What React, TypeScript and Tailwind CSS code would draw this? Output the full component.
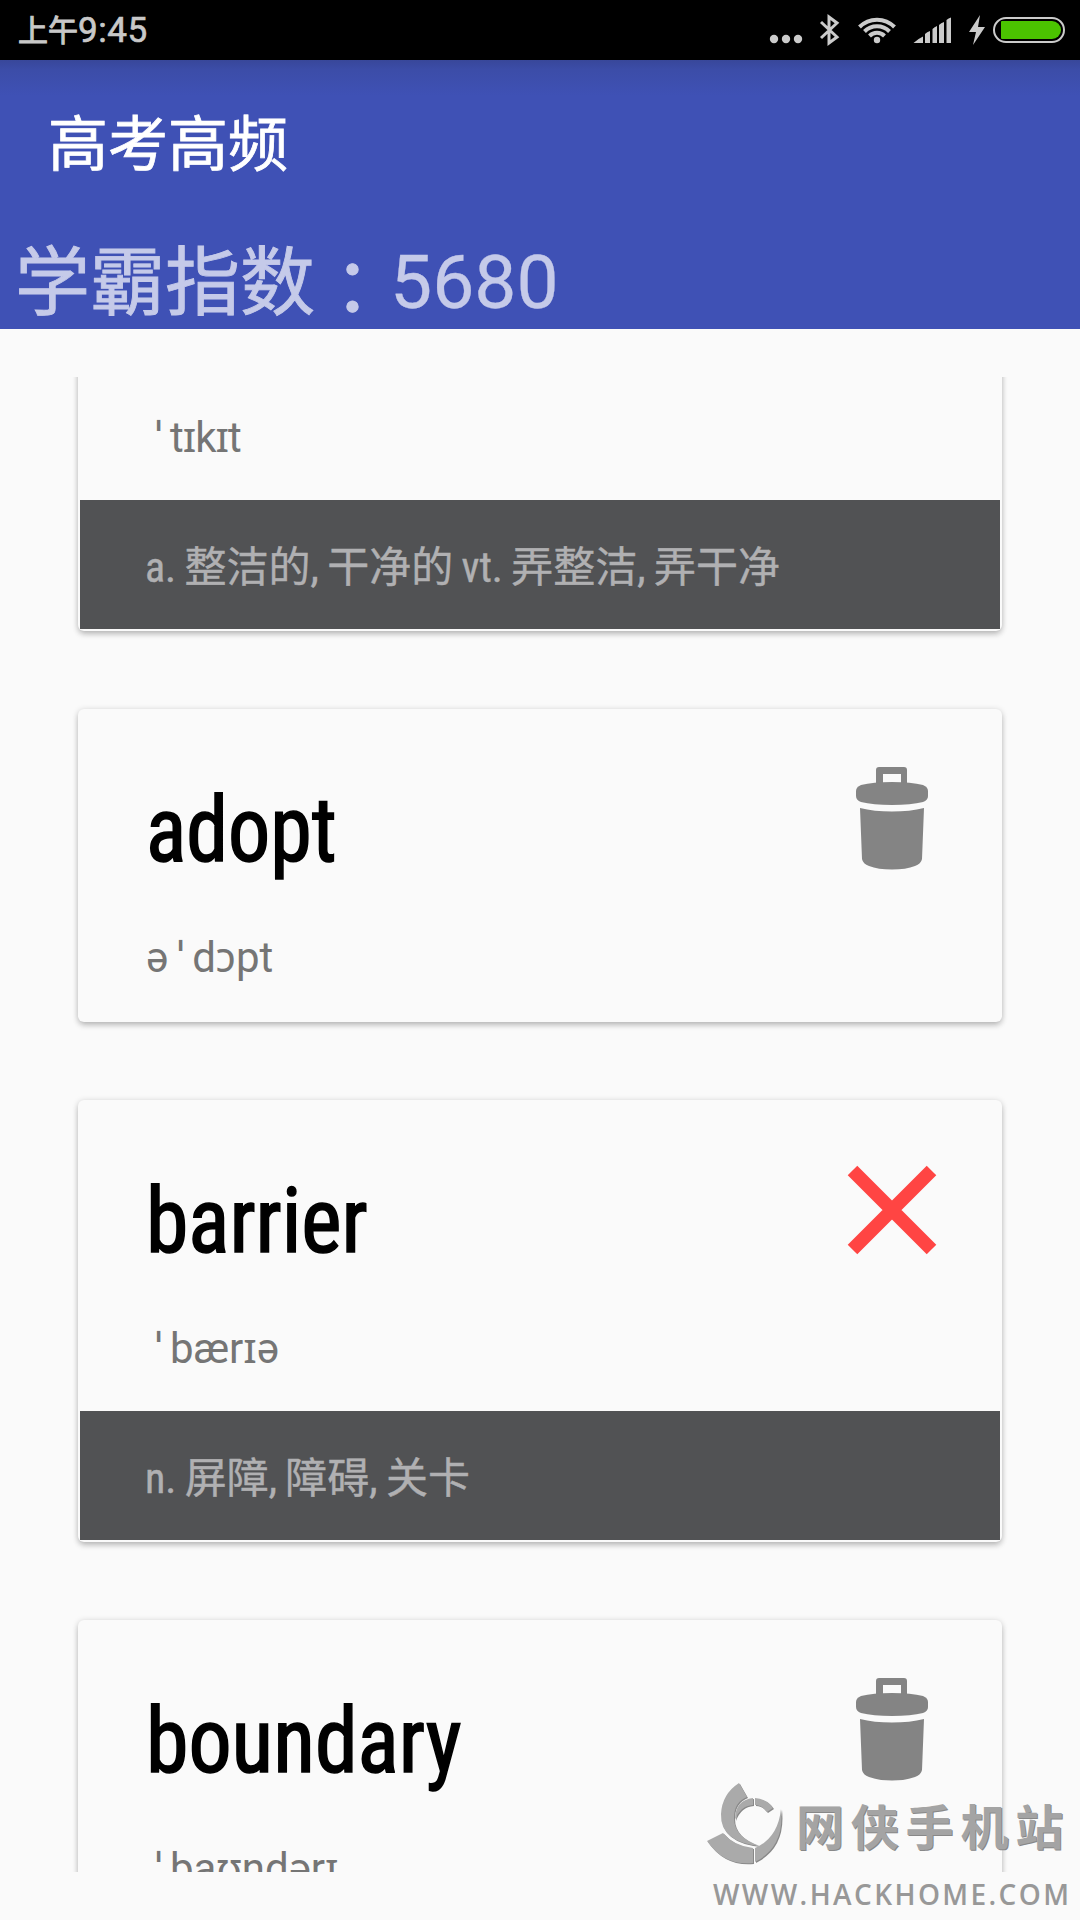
import React from "react";

type Entry = {
  id: string;
  word?: string;
  fit: string;
  phonetic: React.ReactNode;
  meaning?: string;
  icon?: "trash" | "close";
};

const Stress = () => <span className="inline-block w-[24px] pl-px text-center">ˈ</span>;

const entries: Entry[] = [
  {
    id: "first",
    fit: "",
    phonetic: <><Stress /><span className="tracking-[-1px]">tɪkɪt</span></>,
    meaning: "a. 整洁的, 干净的 vt. 弄整洁, 弄干净",
  },
  { id: "adopt", word: "adopt", fit: "scale-x-[0.935]", phonetic: <>ə<Stress />dɔpt</>, icon: "trash" },
  {
    id: "barrier",
    word: "barrier",
    fit: "scale-x-[0.953]",
    phonetic: <><Stress />bærɪə</>,
    meaning: "n. 屏障, 障碍, 关卡",
    icon: "close",
  },
  { id: "boundary", word: "boundary", fit: "scale-x-[0.956]", phonetic: <><Stress />baʊndərɪ</>, icon: "trash" },
];

function TrashIcon() {
  return (
    <svg width="74" height="106" viewBox="0 0 74 106" fill="#848484">
      <path fillRule="evenodd" d="M21 19V4q0-3 3-3h25q3 0 3 3v15h-6V8H28v11z" />
      <path d="M1 25q0-4 5-6Q18 16 37 16T68 19q5 2 5 6v5q0 4-5 6Q56 39 37 39T6 36Q1 34 1 30z" />
      <path d="M5 42q14 3.500 32 3.500T69 42l-2 51q-1 5-7 7-9 3.500-23 3.500T14 100q-6-2-7-7z" />
    </svg>
  );
}

function CloseIcon() {
  return (
    <svg width="90" height="90" viewBox="0 0 90 90" stroke="#ff4543" strokeWidth="13.500">
      <path d="M5.500 5.500l79 79M84.500 5.500l-79 79" />
    </svg>
  );
}

function Card({ entry }: { entry: Entry }) {
  return (
    <section className="w-full shrink-0 rounded-[6px] bg-[#fafafa] px-[2px] pb-[2px] shadow-[0_4px_6px_-1px_rgba(0,0,0,0.18),0_1px_6px_rgba(0,0,0,0.18)]">
      <div className="flex h-[311px] justify-between pl-[66px]">
        <div className="flex flex-col items-start pt-[72px]">
          <h2
            className={`h-[100px] origin-left whitespace-nowrap font-['Roboto_Condensed','Roboto',sans-serif] text-[90px] leading-[100px] text-black [font-stretch:75%] [-webkit-text-stroke:1.6px_black] ${entry.fit}`}
          >
            {entry.word}
          </h2>
          <p className="mt-[52px] h-[50px] whitespace-nowrap font-['Roboto','Noto_Sans',sans-serif] text-[42px] leading-[50px] text-[#757575]">
            {entry.phonetic}
          </p>
        </div>
        <div className="flex w-[216px] justify-center pt-[57px]">
          {entry.icon === "trash" && <TrashIcon />}
          {entry.icon === "close" && <div className="pt-[8px]"><CloseIcon /></div>}
        </div>
      </div>
      {entry.meaning && (
        <div className="flex h-[129px] items-center bg-[#515254] pl-[65px] pt-[6px] font-['Roboto_Condensed','Roboto','Noto_Sans_CJK_SC',sans-serif] text-[42px] leading-[60px] text-[#b0b0b2] [font-stretch:75%] [word-spacing:-1.3px] [-webkit-text-stroke:0.4px_#b0b0b2]">
          {entry.meaning}
        </div>
      )}
    </section>
  );
}

function StatusIcons() {
  return (
    <svg width="340" height="60" viewBox="0 0 340 60" fill="#cbcbcb">
      <circle cx="34" cy="39" r="4.200" />
      <circle cx="46" cy="39" r="4.200" />
      <circle cx="58" cy="39" r="4.200" />
      <path d="M81 22l16 15-8 6V17l8 6-16 15" fill="none" stroke="#cbcbcb" strokeWidth="3" />
      <g fill="none" stroke="#cbcbcb" strokeWidth="4">
        <path d="M119.500 27a24.500 24.500 0 0 1 35 0" />
        <path d="M124.500 31.500a17.500 17.500 0 0 1 25 0" />
        <path d="M129.500 36a10.500 10.500 0 0 1 15 0" />
      </g>
      <circle cx="137" cy="40" r="3.200" />
      <path d="M173.500 43q5-4.500 9.500-6.500v6.500zM185 43v-9q2-2 5-3v12zM192.500 43V29q2-2 4.500-3v17zM199 43V25q2-2 5-3v21zM206.500 43V20q2-2 4.500-2.500V43z" />
      <path d="M240 15l-11 17h7l-3 13 12-18h-7z" />
      <rect x="254" y="18" width="70" height="24" rx="12" fill="none" stroke="#cbcbcb" strokeWidth="2" />
      <path d="M262 21h50a9 9 0 0 1 0 18h-50q-1 0-1-1V22q0-1 1-1z" fill="#4bc400" />
    </svg>
  );
}

function Watermark() {
  return (
    <div className="absolute left-[706px] top-[1782px] flex h-[130px] w-[374px] flex-col text-[#a4a4a4]">
      <div className="flex h-[84px]">
        <svg width="80" height="84" viewBox="0 0 80 84" fill="#aaaaaa" className="drop-shadow-[1px_1px_0_#888888]">
          <path d="M33 1l8 14Q28 20 28 36q0 19 26 28Q14 60 15 32 16 12 33 1z" />
          <path d="M17 51Q28 64 47 66v15Q18 84 1 59z" />
          <path d="M49 66Q72 56 75 27q4 38-26 53z" />
          <path d="M47 16v7Q34 24 29 38 29 18 47 16zM49 16q12 1 18 10l-6 4q-5-7-12-7z" />
        </svg>
        <span className="whitespace-nowrap pl-[10px] font-['Noto_Sans_CJK_SC',sans-serif] text-[48px] font-bold leading-[85px] tracking-[6.8px] [text-shadow:1px_1px_0_#888888]">
          网侠手机站
        </span>
      </div>
      <span className="whitespace-nowrap pl-[7px] font-['Open_Sans',sans-serif] text-[28px] font-semibold leading-[56px] tracking-[2.4px] text-[#989898]">
        WWW.HACKHOME.COM
      </span>
    </div>
  );
}

export default function App() {
  return (
    <main className="relative flex h-[1920px] w-[1080px] flex-col overflow-hidden bg-[#fafafa]">
      <div className="flex h-[60px] shrink-0 justify-between bg-black pl-[18px] text-[#c8c8c8] [-webkit-text-stroke:0.7px_#c8c8c8]">
        <div className="flex items-center">
          <span className="pb-[4px] font-['Noto_Sans_CJK_SC',sans-serif] text-[30px] leading-[56px] [-webkit-text-stroke:1px_#c8c8c8]">上午</span>
          <span className="pt-px font-['Roboto',sans-serif] text-[35px] leading-[59px] tracking-[0.6px]">9:45</span>
        </div>
        <StatusIcons />
      </div>
      <header className="flex h-[269px] shrink-0 flex-col bg-[#3f51b5] bg-[linear-gradient(to_bottom,#38479a,#3c4da8_10px,#3f51b5_36px)]">
        <h1 className="h-[134px] pl-[48px] pt-[35px] font-['Noto_Sans_CJK_SC',sans-serif] text-[60px] leading-[90px] text-white [-webkit-text-stroke:0.8px_white]">
          高考高频
        </h1>
        <div className="flex pl-[15px] pt-[39px] font-['Noto_Sans_CJK_SC',sans-serif] text-[75px] leading-[90px] text-[#c5cae9] [-webkit-text-stroke:0.9px_#c5cae9]">
          <span>学霸指数</span>
          <span className="pt-[7px] font-['Noto_Sans_CJK_TC',sans-serif]">：</span>
          <span className="pt-[5px] font-['Roboto',sans-serif] [-webkit-text-stroke:0.3px_#c5cae9]">5680</span>
        </div>
      </header>
      <div className="mt-[48px] flex h-[1495px] shrink-0 flex-col overflow-hidden px-[78px]">
        <div className="-mt-[188px] flex flex-col gap-[78px]">
          {entries.map((e) => (
            <Card key={e.id} entry={e} />
          ))}
        </div>
      </div>
      <Watermark />
    </main>
  );
}
